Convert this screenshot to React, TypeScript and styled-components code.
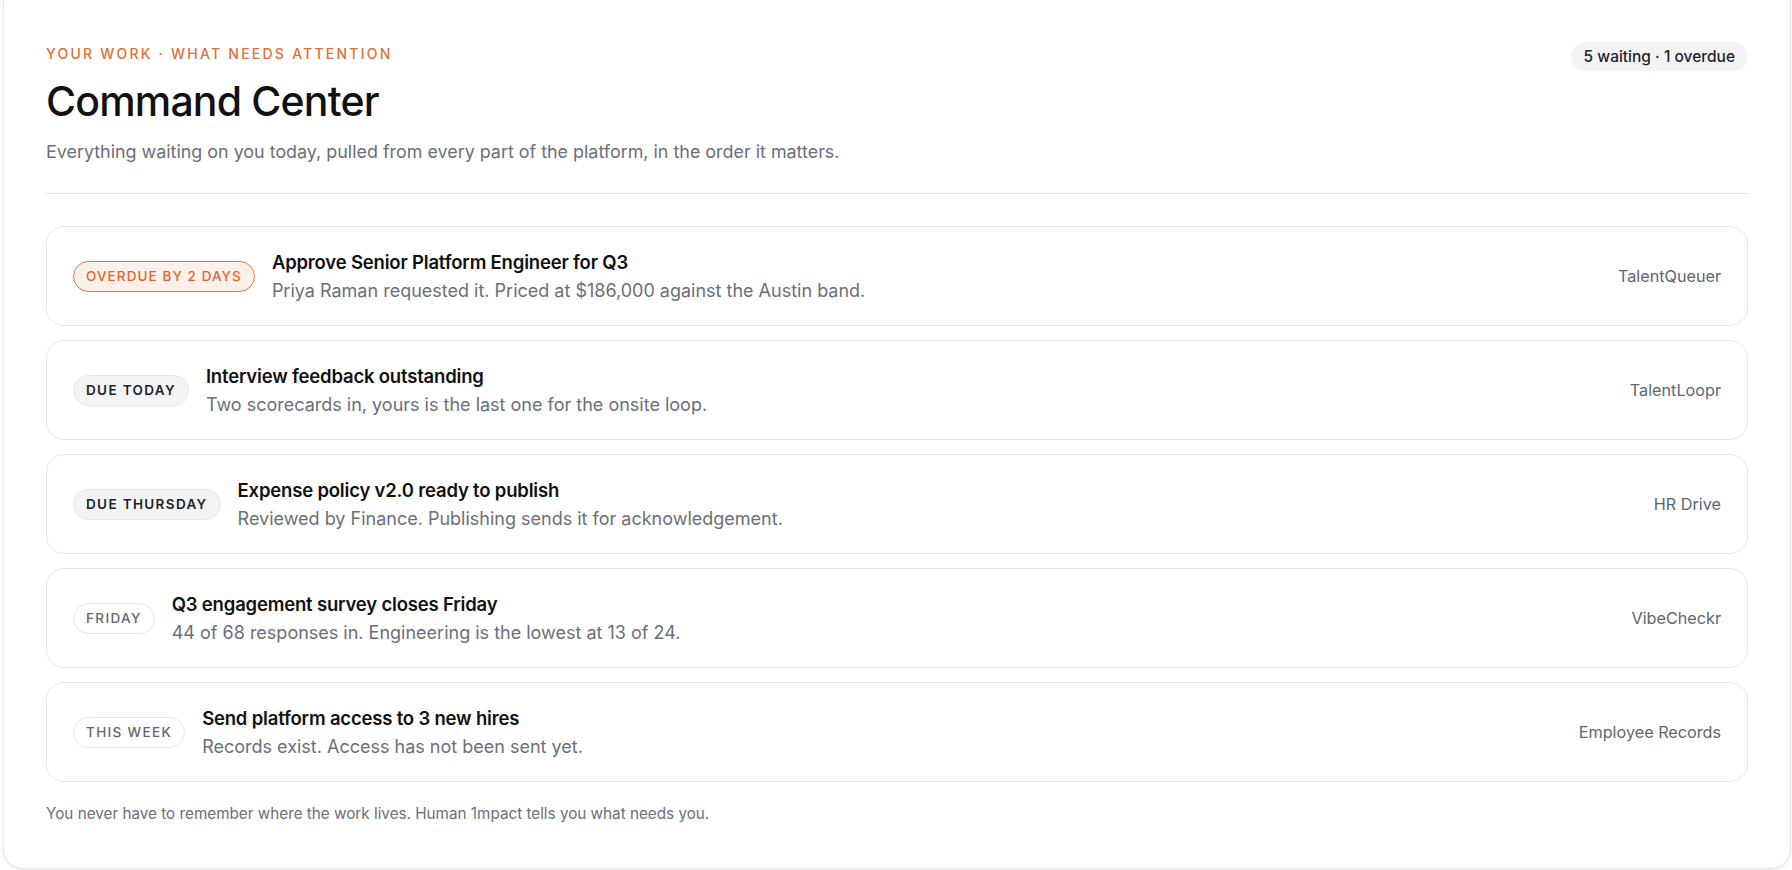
import styled, { createGlobalStyle } from 'styled-components'

const GlobalStyle = createGlobalStyle`
  html, body {
    margin: 0;
    padding: 0;
    background: #ffffff;
  }
  body {
    font-family: Inter, 'Noto Sans', 'Liberation Sans', sans-serif;
    color: #111111;
    -webkit-font-smoothing: antialiased;
  }
`

type Tone = 'overdue' | 'soon' | 'later'

type Task = {
  when: string
  tone: Tone
  title: string
  detail: string
  source: string
}

const tasks: Task[] = [
  {
    when: 'Overdue by 2 days',
    tone: 'overdue',
    title: 'Approve Senior Platform Engineer for Q3',
    detail: 'Priya Raman requested it. Priced at $186,000 against the Austin band.',
    source: 'TalentQueuer',
  },
  {
    when: 'Due today',
    tone: 'soon',
    title: 'Interview feedback outstanding',
    detail: 'Two scorecards in, yours is the last one for the onsite loop.',
    source: 'TalentLoopr',
  },
  {
    when: 'Due Thursday',
    tone: 'soon',
    title: 'Expense policy v2.0 ready to publish',
    detail: 'Reviewed by Finance. Publishing sends it for acknowledgement.',
    source: 'HR Drive',
  },
  {
    when: 'Friday',
    tone: 'later',
    title: 'Q3 engagement survey closes Friday',
    detail: '44 of 68 responses in. Engineering is the lowest at 13 of 24.',
    source: 'VibeCheckr',
  },
  {
    when: 'This week',
    tone: 'later',
    title: 'Send platform access to 3 new hires',
    detail: 'Records exist. Access has not been sent yet.',
    source: 'Employee Records',
  },
]

const toneStyles: Record<Tone, { bg: string; border: string; color: string; weight: number; tracking: string }> = {
  overdue: { bg: '#fcf1ea', border: '#e8743d', color: '#e0672c', weight: 500, tracking: '0.08em' },
  soon: { bg: '#f3f4f6', border: '#e5e7eb', color: '#1f2328', weight: 600, tracking: '0.1em' },
  later: { bg: '#ffffff', border: '#e5e7eb', color: '#5f6670', weight: 500, tracking: '0.1em' },
}

const Styled = {
  Page: styled.div`
    padding: 0 1px 3px 3px;
  `,
  Card: styled.main`
    background: #ffffff;
    border: 1px solid #e6e7ea;
    border-top: 0;
    border-radius: 0 0 20px 20px;
    box-shadow: 0 2px 4px rgba(17, 24, 39, 0.06);
    padding: 42px 42px 44px 42px;
  `,
  Header: styled.header`
    display: flex;
    justify-content: space-between;
    align-items: flex-start;
  `,
  Eyebrow: styled.div`
    font-size: 14px;
    line-height: 24px;
    letter-spacing: 0.16em;
    text-transform: uppercase;
    color: #e0703a;
    font-weight: 500;
  `,
  Title: styled.h1`
    margin: 11px 0 0;
    font-size: 41px;
    line-height: 48px;
    font-weight: 500;
    letter-spacing: -0.02em;
    color: #111111;
  `,
  Subtitle: styled.p`
    margin: 15px 0 0;
    font-size: 17.9px;
    line-height: 24px;
    color: #6b7078;
  `,
  Count: styled.span`
    display: inline-flex;
    align-items: center;
    height: 29px;
    padding: 0 13px;
    border-radius: 999px;
    background: #f3f4f6;
    font-size: 15.5px;
    font-weight: 500;
    color: #1f2328;
    white-space: nowrap;
  `,
  Divider: styled.hr`
    margin: 29px 0 32px;
    border: 0;
    border-top: 1px solid #e3e4e7;
  `,
  List: styled.ul`
    list-style: none;
    margin: 0;
    padding: 0;
    display: flex;
    flex-direction: column;
    gap: 14px;
  `,
  Row: styled.li`
    display: flex;
    align-items: center;
    height: 100px;
    box-sizing: border-box;
    padding: 0 26px;
    border: 1px solid #e5e6e9;
    border-radius: 18px;
    background: #ffffff;
  `,
  When: styled.span<{ $tone: Tone }>`
    flex: none;
    display: inline-flex;
    align-items: center;
    height: 31px;
    box-sizing: border-box;
    padding: 0 12px;
    border-radius: 999px;
    border: 1px solid ${({ $tone }) => toneStyles[$tone].border};
    background: ${({ $tone }) => toneStyles[$tone].bg};
    color: ${({ $tone }) => toneStyles[$tone].color};
    font-size: 13.5px;
    font-weight: ${({ $tone }) => toneStyles[$tone].weight};
    letter-spacing: ${({ $tone }) => toneStyles[$tone].tracking};
    text-transform: uppercase;
    white-space: nowrap;
  `,
  Body: styled.div`
    flex: 1;
    min-width: 0;
    margin-left: 17px;
  `,
  TaskTitle: styled.div`
    font-size: 18.5px;
    line-height: 26px;
    font-weight: 600;
    letter-spacing: -0.01em;
    color: #111111;
  `,
  Detail: styled.div`
    margin-top: 4px;
    font-size: 18px;
    line-height: 24px;
    color: #6b7078;
  `,
  Source: styled.span`
    flex: none;
    margin-left: 24px;
    font-size: 16.2px;
    color: #5f6670;
  `,
  Footnote: styled.p`
    margin: 22px 0 0;
    font-size: 15.25px;
    line-height: 20px;
    color: #6b7078;
  `,
}

const App = () => {
  const overdue = tasks.filter((t) => t.tone === 'overdue').length
  return (
    <Styled.Page>
      <GlobalStyle />
      <Styled.Card>
        <Styled.Header>
          <div>
            <Styled.Eyebrow>Your work · What needs attention</Styled.Eyebrow>
            <Styled.Title>Command Center</Styled.Title>
            <Styled.Subtitle>
              Everything waiting on you today, pulled from every part of the platform, in the order it matters.
            </Styled.Subtitle>
          </div>
          <Styled.Count>
            {tasks.length} waiting · {overdue} overdue
          </Styled.Count>
        </Styled.Header>
        <Styled.Divider />
        <Styled.List>
          {tasks.map((task) => (
            <Styled.Row key={task.title}>
              <Styled.When $tone={task.tone}>{task.when}</Styled.When>
              <Styled.Body>
                <Styled.TaskTitle>{task.title}</Styled.TaskTitle>
                <Styled.Detail>{task.detail}</Styled.Detail>
              </Styled.Body>
              <Styled.Source>{task.source}</Styled.Source>
            </Styled.Row>
          ))}
        </Styled.List>
        <Styled.Footnote>
          You never have to remember where the work lives. Human 1mpact tells you what needs you.
        </Styled.Footnote>
      </Styled.Card>
    </Styled.Page>
  )
}

export default App
